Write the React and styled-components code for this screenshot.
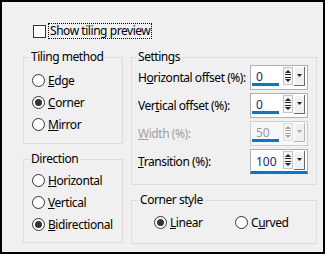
import styled, { createGlobalStyle } from "styled-components";

const GlobalStyle = createGlobalStyle`
    html, body {
        margin: 0;
        padding: 0;
        background: #f0f0f0;
    }
    body {
        font-family: "Noto Sans", "Open Sans", sans-serif;
        font-size: 12px;
        letter-spacing: -0.45px;
        color: #000;
    }
`

const Frame = styled.div`
    width: 325px;
    height: 254px;
    box-sizing: border-box;
    border: 2px solid #000;
    background: #f0f0f0;
    padding: 22px 0 0 21px;
`

const CheckRow = styled.div`
    display: flex;
    align-items: center;
    height: 14px;
    margin-left: 10px;
`

const CheckBox = styled.span`
    width: 11px;
    height: 11px;
    border: 1px solid #333;
    background: #fff;
    margin-right: 3px;
`

const FocusLabel = styled.span`
    outline: 1px dotted #000;
    line-height: 14px;
    padding: 0 1px;
`

const Columns = styled.div`
    display: grid;
    grid-template-columns: 100px 186px;
    column-gap: 8px;
    margin-top: 11px;
`

const Column = styled.div`
    display: flex;
    flex-direction: column;
    gap: 7px;
`

const Group = styled.fieldset`
    margin: 0;
    padding: 0 0 0 ${(props) => props.$pad}px;
    border: 1px solid #dcdcdc;
    height: ${(props) => props.$h}px;
    box-sizing: border-box;
    min-width: 0;
`

const Legend = styled.legend`
    padding: 0 2px;
    margin-left: ${(props) => props.$offset}px;
    line-height: 16px;
`

const RadioList = styled.div`
    display: flex;
    flex-direction: ${(props) => (props.$row ? "row" : "column")};
    padding-top: ${(props) => props.$top}px;
`

const RadioItem = styled.div`
    display: flex;
    align-items: center;
    height: 22px;
    width: ${(props) => (props.$w ? `${props.$w}px` : "auto")};
`

const Circle = styled.span`
    width: 11px;
    height: 11px;
    border: 1px solid #333;
    border-radius: 50%;
    background: #fff;
    margin-right: 3px;
    display: flex;
    align-items: center;
    justify-content: center;
    &::after {
        content: "";
        width: 7px;
        height: 7px;
        border-radius: 50%;
        background: ${(props) => (props.$on ? "#333" : "transparent")};
    }
`

const Key = styled.span`
    text-decoration: underline;
`

const SettingRows = styled.div`
    display: flex;
    flex-direction: column;
    gap: 3px;
`

const SettingRow = styled.div`
    display: grid;
    grid-template-columns: 112px 58px;
    align-items: center;
    height: 25px;
    white-space: nowrap;
    color: ${(props) => (props.$off ? "#a0a0a0" : "#000")};
`

const Spinner = styled.div`
    width: 58px;
    height: 25px;
    box-sizing: border-box;
    border: 1px solid ${(props) => (props.$off ? "#cfcfcf" : "#b0b0b0")};
    background: ${(props) => (props.$off ? "#f7f7f7" : "#fff")};
    display: flex;
    align-items: flex-start;
    padding: 1px 1px 0 1px;
    ${(props) => props.$focus && `border-bottom: 3px solid #0078d7;`}
`

const Field = styled.div`
    width: 27px;
    height: 19px;
    padding-left: 4px;
    box-sizing: border-box;
    line-height: 19px;
    letter-spacing: 0;
    color: ${(props) => (props.$off ? "#9a9a9a" : "#1c1c80")};
    border-bottom: ${(props) => (props.$focus ? "0" : "3px solid #0078d7")};
    margin-right: 4px;
    margin-top: ${(props) => (props.$focus ? "1px" : "0")};
`

const SpinIcon = ({ off }) => {
    const c = off ? "#a8a8a8" : "#222";
    return (
        <svg width="10" height="18" viewBox="0 0 10 18" style={{ marginRight: 1 }}>
            <rect x="0.5" y="0.5" width="9" height="17" fill="#f4f4f4" stroke={off ? "#dedede" : "#c4c4c4"} />
            <path d="M2 6 L5 3 L8 6 Z" fill={c} />
            <line x1="2" y1="7.5" x2="8" y2="7.5" stroke={c} />
            <line x1="2" y1="10.5" x2="8" y2="10.5" stroke={c} />
            <path d="M2 12 L5 15 L8 12 Z" fill={c} />
        </svg>
    );
};

const DropIcon = ({ off }) => {
    const c = off ? "#a8a8a8" : "#222";
    return (
        <svg width="11" height="19" viewBox="0 0 11 19">
            <rect x="0" y="0" width="11" height="19" fill="#f0f0f0" />
            <line x1="0" y1="0.5" x2="10" y2="0.5" stroke="#fff" />
            <line x1="0.5" y1="0" x2="0.5" y2="18" stroke="#fff" />
            <line x1="10.5" y1="0" x2="10.5" y2="19" stroke={off ? "#b8b8b8" : "#6a6a6a"} />
            <line x1="0" y1="18.5" x2="11" y2="18.5" stroke={off ? "#b8b8b8" : "#6a6a6a"} />
            <path d="M3 7 L8 7 L5.5 10 Z" fill={c} />
        </svg>
    );
};

const NumberBox = ({ value, off, focus }) => (
    <Spinner $off={off} $focus={focus}>
        <Field $off={off} $focus={focus}>{value}</Field>
        <SpinIcon off={off} />
        <DropIcon off={off} />
    </Spinner>
);

const Radio = ({ on, children, w }) => (
    <RadioItem $w={w}>
        <Circle $on={on} />
        <span>{children}</span>
    </RadioItem>
);

const App = () => {
    return (
        <>
            <GlobalStyle />
            <Frame>
                <CheckRow>
                    <CheckBox />
                    <FocusLabel>Show tiling preview</FocusLabel>
                </CheckRow>
                <Columns>
                    <Column>
                        <Group $h={95} $pad={8}>
                            <Legend $offset={-3}>Tiling method</Legend>
                            <RadioList $top={4}>
                                <Radio><Key>E</Key>dge</Radio>
                                <Radio on><Key>C</Key>orner</Radio>
                                <Radio><Key>M</Key>irror</Radio>
                            </RadioList>
                        </Group>
                        <Group $h={92} $pad={8}>
                            <Legend $offset={-3}>Direction</Legend>
                            <RadioList $top={2}>
                                <Radio><Key>H</Key>orizontal</Radio>
                                <Radio><Key>V</Key>ertical</Radio>
                                <Radio on><Key>B</Key>idirectional</Radio>
                            </RadioList>
                        </Group>
                    </Column>
                    <Column>
                        <Group $h={136} $pad={6}>
                            <Legend $offset={-2}>Settings</Legend>
                            <SettingRows>
                                <SettingRow>
                                    <span>H<Key>o</Key>rizontal offset (%):</span>
                                    <NumberBox value="0" />
                                </SettingRow>
                                <SettingRow>
                                    <span>Ver<Key>t</Key>ical offset (%):</span>
                                    <NumberBox value="0" />
                                </SettingRow>
                                <SettingRow $off>
                                    <span><Key>W</Key>idth (%):</span>
                                    <NumberBox value="50" off />
                                </SettingRow>
                                <SettingRow>
                                    <span><Key>T</Key>ransition (%):</span>
                                    <NumberBox value="100" focus />
                                </SettingRow>
                            </SettingRows>
                        </Group>
                        <Group $h={52} $pad={22}>
                            <Legend $offset={-16}>Corner style</Legend>
                            <RadioList $row $top={3}>
                                <Radio on w={81}><Key>L</Key>inear</Radio>
                                <Radio>C<Key>u</Key>rved</Radio>
                            </RadioList>
                        </Group>
                    </Column>
                </Columns>
            </Frame>
        </>
    );
};

export default App;
